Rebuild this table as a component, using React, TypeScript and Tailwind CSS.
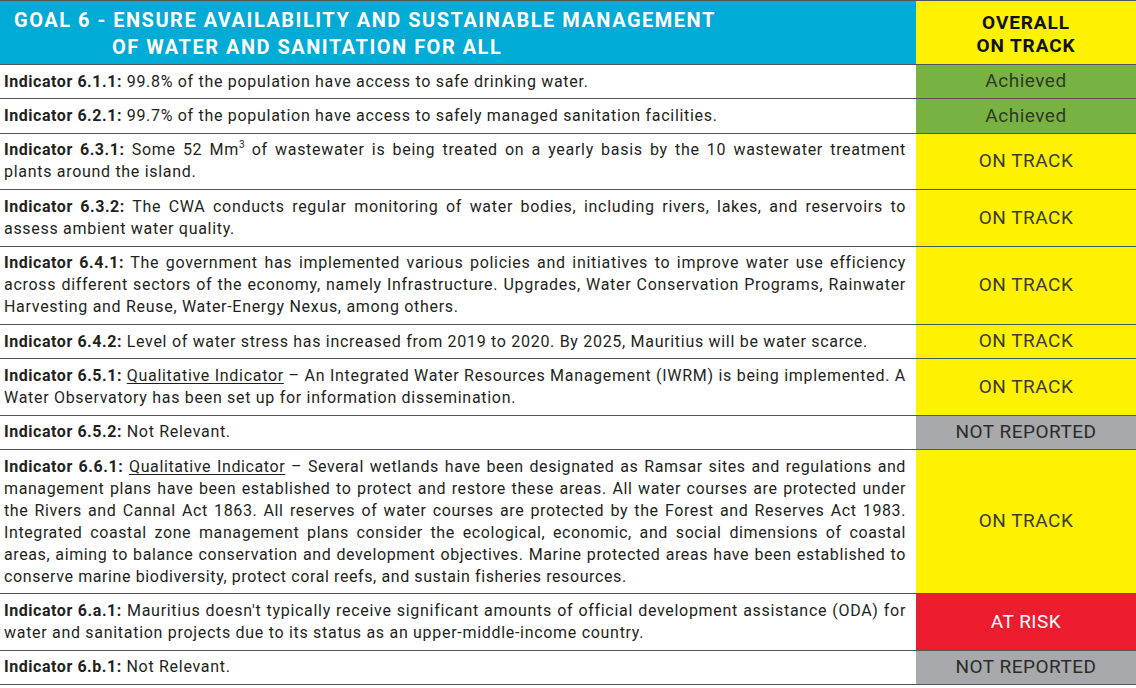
import React from 'react';

type Status = 'ACHIEVED' | 'ON_TRACK' | 'NOT_REPORTED' | 'AT_RISK';

type Row = {
    code: string;
    qualitative?: boolean;
    tight?: boolean;
    text: React.ReactNode;
    status: Status;
};

const rows: Row[] = [
    { code: '6.1.1', text: '99.8% of the population have access to safe drinking water.', status: 'ACHIEVED' },
    { code: '6.2.1', text: '99.7% of the population have access to safely managed sanitation facilities.', status: 'ACHIEVED' },
    {
        code: '6.3.1',
        text: <>Some 52 Mm<sup className="text-[10px] -top-[7px] tracking-normal">3</sup> of wastewater is being treated on a yearly basis by the 10 wastewater treatment plants around the island.</>,
        status: 'ON_TRACK',
    },
    {
        code: '6.3.2',
        text: 'The CWA conducts regular monitoring of water bodies, including rivers, lakes, and reservoirs to assess ambient water quality.',
        status: 'ON_TRACK',
    },
    {
        code: '6.4.1',
        text: 'The government has implemented various policies and initiatives to improve water use efficiency across different sectors of the economy, namely Infrastructure. Upgrades, Water Conservation Programs, Rainwater Harvesting and Reuse, Water-Energy Nexus, among others.',
        status: 'ON_TRACK',
    },
    {
        code: '6.4.2',
        text: 'Level of water stress has increased from 2019 to 2020. By 2025, Mauritius will be water scarce.',
        status: 'ON_TRACK',
    },
    {
        code: '6.5.1',
        qualitative: true,
        text: 'An Integrated Water Resources Management (IWRM) is being implemented. A Water Observatory has been set up for information dissemination.',
        status: 'ON_TRACK',
    },
    { code: '6.5.2', text: 'Not Relevant.', status: 'NOT_REPORTED' },
    {
        code: '6.6.1',
        qualitative: true,
        tight: true,
        text: 'Several wetlands have been designated as Ramsar sites and regulations and management plans have been established to protect and restore these areas. All water courses are protected under the Rivers and Cannal Act 1863. All reserves of water courses are protected by the Forest and Reserves Act 1983. Integrated coastal zone management plans consider the ecological, economic, and social dimensions of coastal areas, aiming to balance conservation and development objectives. Marine protected areas have been established to conserve marine biodiversity, protect coral reefs, and sustain fisheries resources.',
        status: 'ON_TRACK',
    },
    {
        code: '6.a.1',
        text: "Mauritius doesn't typically receive significant amounts of official development assistance (ODA) for water and sanitation projects due to its status as an upper-middle-income country.",
        status: 'AT_RISK',
    },
    { code: '6.b.1', text: 'Not Relevant.', status: 'NOT_REPORTED' },
];

const statusStyles: Record<Status, { cell: string; label: string }> = {
    ACHIEVED: { cell: 'bg-[#78b243] text-[#2e3a22]', label: 'Achieved' },
    ON_TRACK: { cell: 'bg-[#fff200] text-[#3b3b2a]', label: 'ON TRACK' },
    NOT_REPORTED: { cell: 'bg-[#a7a9ac] text-[#2b2b2b]', label: 'NOT REPORTED' },
    AT_RISK: { cell: 'bg-[#ed1c2e] text-white', label: 'AT RISK' },
};

export default function App() {
    return (
        <div className="w-[1136px] h-[688px] bg-white overflow-hidden text-[#231f20]" style={{ fontFamily: 'Roboto, "Liberation Sans", sans-serif' }}>
            {/* header */}
            <div className="grid grid-cols-[916px_220px] border-t border-b border-[#555]">
                <div className="bg-[#00abd6] h-[63px] pl-[14px] pt-[6px] text-white font-bold text-[20px] leading-[27px] tracking-[1.5px]">
                    <div>GOAL 6 - ENSURE AVAILABILITY AND SUSTAINABLE MANAGEMENT</div>
                    <div className="pl-[98px]">OF WATER AND SANITATION FOR ALL</div>
                </div>
                <div className="bg-[#fff200] flex flex-col items-center justify-center font-bold text-[19px] leading-[23px] tracking-[0.9px] text-[#111] pt-[2px]">
                    <div>OVERALL</div>
                    <div>ON TRACK</div>
                </div>
            </div>

            {rows.map((row) => {
                const s = statusStyles[row.status];
                return (
                    <div key={row.code} className="grid grid-cols-[916px_220px] border-b border-[#555]">
                        <div className={`pl-[4px] pr-[10px] py-[5.7px] text-[16px] leading-[22px] text-justify ${row.tight ? 'tracking-[0.6px]' : 'tracking-[0.7px]'}`}>
                            <span className="font-bold tracking-[0.55px]">Indicator {row.code}:</span>{' '}
                            {row.qualitative && (
                                <><span className="underline underline-offset-2">Qualitative Indicator</span> – </>
                            )}
                            {row.text}
                        </div>
                        <div className={`${s.cell} flex items-center justify-center text-[19px] tracking-[0.5px]`}>
                            {s.label}
                        </div>
                    </div>
                );
            })}
        </div>
    );
}
